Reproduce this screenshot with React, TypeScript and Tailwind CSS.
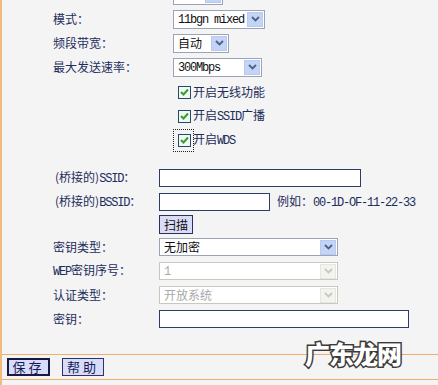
import type { ReactNode } from "react";

const FONT = "font-['Noto_Sans_CJK_SC','Noto_Sans_CJK_SC',sans-serif]";

// latin glyphs in the old SimSun pages are ~6px wide
function L({ children }: { children: ReactNode }) {
  return (
    <span className="font-['Liberation_Mono',monospace] text-[12px] tracking-[-1.2px]">
      {children}
    </span>
  );
}

function Arrow({ disabled }: { disabled?: boolean }) {
  return (
    <span
      className={`flex h-[15px] w-[16px] items-center justify-center border ${
        disabled
          ? "border-[#e6e6e0] bg-[#f3f3ef]"
          : "border-[#b8c9f2] bg-[#c4d4f7]"
      }`}
    >
      <svg width="9" height="6" viewBox="0 0 9 6">
        <path
          d="M1 1 L4.5 4.5 L8 1"
          fill="none"
          stroke={disabled ? "#c8c8c0" : "#4d6185"}
          strokeWidth="1.8"
        />
      </svg>
    </span>
  );
}

function Select({
  w,
  h = 19,
  children,
  disabled,
}: {
  w: string;
  h?: number;
  children?: ReactNode;
  disabled?: boolean;
}) {
  return (
    <div
      className={`flex ${w} ${h === 19 ? "h-[19px]" : "h-[18px]"} items-center justify-between border bg-white pl-[4px] pr-[1px] text-[12px] ${
        disabled
          ? "border-[#cac8bb] text-[#a9a9a9]"
          : "border-[#9aa4b4] text-[#111]"
      }`}
    >
      <span className="leading-none">{children}</span>
      <Arrow disabled={disabled} />
    </div>
  );
}

function Input({ w }: { w: string }) {
  return <div className={`${w} h-[18px] border border-[#2c3d68] bg-white`} />;
}

function Check({ children, focus }: { children: ReactNode; focus?: boolean }) {
  return (
    <div className="flex h-[24px] items-center pl-[172px]">
      <div
        className={`flex items-center py-[4px] pl-[4px] pr-[2px] ${
          focus ? "outline outline-1 outline-dotted outline-[#222]" : ""
        }`}
      >
        <span className="flex h-[13px] w-[13px] items-center justify-center border border-[#1f4c6e] bg-[#f4f6f0]">
          <svg width="9" height="8" viewBox="0 0 9 8">
            <path
              d="M1 4 L3.5 6.5 L8 1.5"
              fill="none"
              stroke="#2fa033"
              strokeWidth="2"
            />
          </svg>
        </span>
      </div>
      <span className="text-[12px] text-[#1d2c5a]">{children}</span>
    </div>
  );
}

function Row({
  label,
  pad,
  h = "h-[24px]",
  children,
}: {
  label?: ReactNode;
  pad: string;
  h?: string;
  children: ReactNode;
}) {
  return (
    <div className={`flex ${h} items-center pl-[51px]`}>
      <div className={`${pad} shrink-0 text-[12px] text-[#1d2c5a]`}>{label}</div>
      {children}
    </div>
  );
}

export default function App() {
  return (
    <div
      className={`relative h-[385px] w-[438px] overflow-hidden border-l-2 border-[#efbc7e] bg-[#f4f4f5] ${FONT}`}
    >
      <div className="-mt-[17px] flex flex-col">
        <Row pad="w-[120px]">
          <Select w="w-[50px]" />
        </Row>
        <Row label="模式：" pad="w-[120px]">
          <Select w="w-[92px]">
            <L>11bgn mixed</L>
          </Select>
        </Row>
        <Row label="频段带宽：" pad="w-[120px]">
          <Select w="w-[56px]">自动</Select>
        </Row>
        <Row label="最大发送速率：" pad="w-[120px]">
          <Select w="w-[89px]">
            <L>300Mbps</L>
          </Select>
        </Row>

        <div className="mt-[1px]" />
        <Check>开启无线功能</Check>
        <Check>
          开启<L>SSID</L>广播
        </Check>
        <Check focus>
          开启<L>WDS</L>
        </Check>

        <div className="h-[14px]" />
        <Row
          label={
            <>
              (桥接的)<L>SSID</L>：
            </>
          }
          pad="w-[106px] pl-[2px]"
        >
          <Input w="w-[202px]" />
        </Row>
        <Row
          label={
            <>
              (桥接的)<L>BSSID</L>：
            </>
          }
          pad="w-[106px] pl-[2px]"
        >
          <Input w="w-[111px]" />
          <span className="ml-[7px] text-[12px] text-[#1d2c5a]">
            例如：<L>00-1D-OF-11-22-33</L>
          </span>
        </Row>
        <Row pad="w-[106px]" h="h-[21px]">
          <button className="flex h-[19px] w-[34px] items-center justify-center border border-[#28305e] bg-[#dadcf6] text-[12px] text-[#111]">
            扫描
          </button>
        </Row>
        <Row label="密钥类型：" pad="w-[106px]">
          <Select w="w-[179px]" h={18}>
            无加密
          </Select>
        </Row>
        <Row
          label={
            <>
              <L>WEP</L>密钥序号：
            </>
          }
          pad="w-[106px]"
        >
          <Select w="w-[179px]" h={18} disabled>
            <L>1</L>
          </Select>
        </Row>
        <Row label="认证类型：" pad="w-[106px]">
          <Select w="w-[179px]" h={18} disabled>
            开放系统
          </Select>
        </Row>
        <Row label="密钥：" pad="w-[106px]">
          <Input w="w-[250px]" />
        </Row>

        <div className="h-[23px]" />
        <div className="flex h-[26px] items-center gap-[12px] border-y border-[#eeae6e] pl-[5px]">
          <button className="flex h-[18px] w-[43px] items-center justify-center border-2 border-[#161a44] bg-[#d9dcf7] text-[13px] tracking-[3px] text-[#14185a]">
            保存
          </button>
          <button className="flex h-[18px] w-[42px] items-center justify-center border border-[#2a3270] bg-[#d9dcf7] text-[13px] tracking-[3px] text-[#14185a]">
            帮助
          </button>
        </div>
      </div>

      <div className="absolute left-[303px] top-[341px] text-[25px] font-black leading-none tracking-[-1px] text-white [-webkit-text-stroke:3px_#3a3a3a] [paint-order:stroke_fill]">
        广东龙网
      </div>
    </div>
  );
}
